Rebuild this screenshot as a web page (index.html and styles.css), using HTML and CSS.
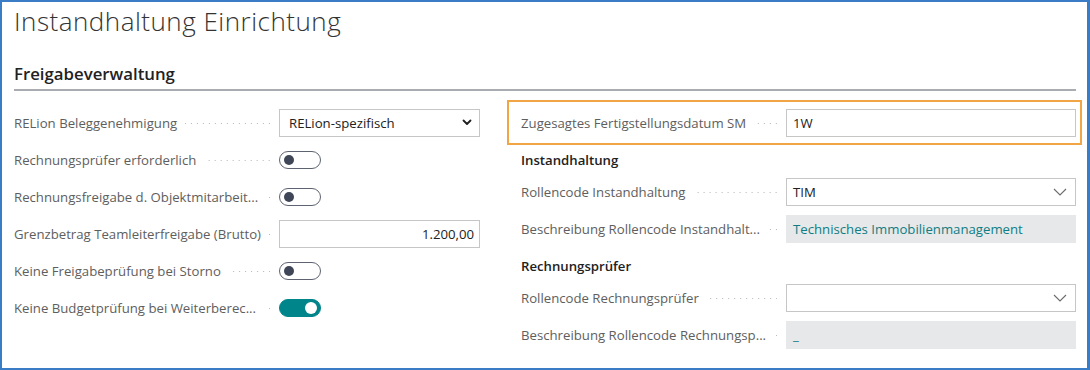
FILE: index.html
```html
<!DOCTYPE html>
<html lang="de">
<head>
<meta charset="utf-8">
<title>Instandhaltung Einrichtung</title>
<link rel="stylesheet" href="styles.css">
</head>
<body>
<div class="frame">
  <h1 class="title">Instandhaltung Einrichtung</h1>
  <h2 class="group">Freigabeverwaltung</h2>
  <div class="cols">
    <div class="col col-left">
      <div class="field">
        <span class="label"><span class="text">RELion Beleggenehmigung</span><span class="dots"></span></span>
        <div class="box select">
          <span class="value">RELion-spezifisch</span>
          <svg class="chev-bold" width="10" height="7" viewBox="0 0 10 7"><path d="M1.5 1.5 L5 5 L8.5 1.5" fill="none" stroke="#1f1f1f" stroke-width="1.8" stroke-linecap="round" stroke-linejoin="round"/></svg>
        </div>
      </div>
      <div class="field">
        <span class="label"><span class="text">Rechnungsprüfer erforderlich</span><span class="dots"></span></span>
        <div class="toggle"><span class="knob"></span></div>
      </div>
      <div class="field">
        <span class="label"><span class="text">Rechnungsfreigabe d. Objektmitarbeit...</span><span class="dots"></span></span>
        <div class="toggle"><span class="knob"></span></div>
      </div>
      <div class="field">
        <span class="label"><span class="text">Grenzbetrag Teamleiterfreigabe (Brutto)</span><span class="dots"></span></span>
        <div class="box input num"><span class="value">1.200,00</span></div>
      </div>
      <div class="field">
        <span class="label"><span class="text">Keine Freigabeprüfung bei Storno</span><span class="dots"></span></span>
        <div class="toggle"><span class="knob"></span></div>
      </div>
      <div class="field">
        <span class="label"><span class="text">Keine Budgetprüfung bei Weiterberec...</span><span class="dots"></span></span>
        <div class="toggle on"><span class="knob"></span></div>
      </div>
    </div>
    <div class="col col-right">
      <div class="field highlight">
        <span class="label"><span class="text">Zugesagtes Fertigstellungsdatum SM</span><span class="dots"></span></span>
        <div class="box input"><span class="value">1W</span></div>
      </div>
      <div class="subhead">Instandhaltung</div>
      <div class="field">
        <span class="label"><span class="text">Rollencode Instandhaltung</span><span class="dots"></span></span>
        <div class="box select">
          <span class="value">TIM</span>
          <svg class="chev-thin" width="14" height="8" viewBox="0 0 14 8"><path d="M1 1 L7 7 L13 1" fill="none" stroke="#6b6b6b" stroke-width="1.1"/></svg>
        </div>
      </div>
      <div class="field">
        <span class="label"><span class="text">Beschreibung Rollencode Instandhalt...</span><span class="dots"></span></span>
        <div class="box readonly"><span class="value link">Technisches Immobilienmanagement</span></div>
      </div>
      <div class="subhead">Rechnungsprüfer</div>
      <div class="field">
        <span class="label"><span class="text">Rollencode Rechnungsprüfer</span><span class="dots"></span></span>
        <div class="box select">
          <span class="value"></span>
          <svg class="chev-thin" width="14" height="8" viewBox="0 0 14 8"><path d="M1 1 L7 7 L13 1" fill="none" stroke="#6b6b6b" stroke-width="1.1"/></svg>
        </div>
      </div>
      <div class="field">
        <span class="label"><span class="text">Beschreibung Rollencode Rechnungsp...</span><span class="dots"></span></span>
        <div class="box readonly"><span class="value link">_</span></div>
      </div>
    </div>
  </div>
</div>
</body>
</html>
```
FILE: styles.css
```css
* { box-sizing: border-box; }

html, body {
  margin: 0;
  padding: 0;
  background: #ffffff;
}

body {
  font-family: "Open Sans", "Noto Sans", sans-serif;
  font-size: 13.2px;
  color: #212121;
}

.frame {
  width: 1090px;
  height: 370px;
  border: 2px solid #3b7cc6;
  border-right-width: 3px;
  padding: 2px 11px 0 12px;
  background: #ffffff;
  overflow: hidden;
}

.title {
  margin: 0;
  font-weight: 300;
  font-size: 26px;
  letter-spacing: 0.5px;
  line-height: 34px;
  color: #333333;
}

.group {
  margin: 25px 0 0 0;
  font-size: 16.8px;
  font-weight: 600;
  line-height: 22px;
  color: #222222;
  padding-bottom: 4px;
  border-bottom: 2px solid #a9acb1;
}

.cols {
  display: grid;
  grid-template-columns: 466px 1fr;
  column-gap: 41px;
  margin-top: 13px;
}

.col {
  display: flex;
  flex-direction: column;
}

.field {
  display: grid;
  grid-template-columns: 265px 1fr;
  align-items: center;
  height: 37px;
}

.field.highlight {
  position: relative;
}

.field.highlight::after {
  content: "";
  position: absolute;
  top: -4px;
  bottom: -4px;
  left: -14px;
  right: -6px;
  border: 2px solid #f2a544;
  pointer-events: none;
}

.label {
  display: flex;
  align-items: center;
  padding-right: 9px;
  color: #5e5e5e;
  line-height: 20px;
  min-width: 0;
}

.label .text {
  white-space: nowrap;
}

.dots {
  flex: 1;
  height: 1px;
  margin-left: 8px;
  margin-top: 2px;
  background-image: linear-gradient(to left, #b5b5b5 0, #b5b5b5 1px, transparent 1px);
  background-size: 6px 1px;
  background-position: right center;
  background-repeat: repeat-x;
}

.box {
  height: 28px;
  display: flex;
  align-items: center;
  border: 1px solid #c6c6c6;
  background: #ffffff;
  padding: 0 8px 0 6px;
  line-height: 20px;
  color: #212121;
}

.col-left .box {
  padding-left: 9px;
}

.select {
  justify-content: space-between;
}

.chev-bold {
  margin-right: -1px;
}

.chev-thin {
  margin-right: 0;
}

.input.num {
  justify-content: flex-end;
  padding-right: 5px;
}

.readonly {
  border-color: #e7e8e9;
  background: #e7e8e9;
}

.link {
  color: #0f7d84;
}

.toggle {
  width: 42px;
  height: 18px;
  border: 1.5px solid #5d6370;
  border-radius: 9px;
  display: flex;
  align-items: center;
  padding: 0 4px;
}

.knob {
  width: 10px;
  height: 10px;
  border-radius: 50%;
  background: #3e4657;
}

.toggle.on {
  background: #00858b;
  border-color: #00858b;
  justify-content: flex-end;
  padding: 0 3px;
}

.toggle.on .knob {
  width: 12px;
  height: 12px;
  background: #ffffff;
}

.subhead {
  height: 32px;
  padding-top: 8px;
  line-height: 23px;
  font-weight: 600;
  color: #212121;
}
```
